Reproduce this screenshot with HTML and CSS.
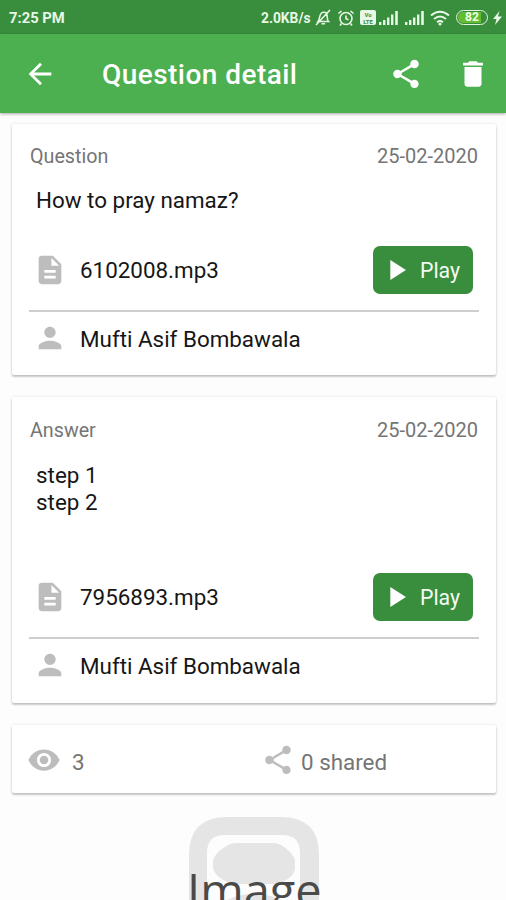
FILE: index.html
```html
<!DOCTYPE html>
<html lang="en">
<head>
<meta charset="utf-8">
<title>Question detail</title>
<link rel="stylesheet" href="styles.css">
</head>
<body>
<svg class="defs" width="0" height="0">
  <symbol id="share" viewBox="0 0 24 24"><path d="M18 16.08c-.76 0-1.44.3-1.96.77L8.91 12.7c.05-.23.09-.46.09-.7s-.04-.47-.09-.7l7.05-4.11c.54.5 1.25.81 2.04.81 1.66 0 3-1.34 3-3s-1.34-3-3-3-3 1.34-3 3c0 .24.04.47.09.7L8.04 9.81C7.5 9.31 6.79 9 6 9c-1.66 0-3 1.34-3 3s1.34 3 3 3c.79 0 1.5-.31 2.04-.81l7.12 4.16c-.05.21-.08.43-.08.65 0 1.61 1.31 2.92 2.92 2.92s2.92-1.31 2.92-2.92-1.31-2.92-2.92-2.92z"/></symbol>
  <symbol id="doc" viewBox="0 0 24 24"><path d="M14 2H6c-1.1 0-1.99.9-1.99 2L4 20c0 1.1.89 2 1.99 2H18c1.1 0 2-.9 2-2V8l-6-6zm2 16H8v-2h8v2zm0-4H8v-2h8v2zm-3-5V3.5L18.5 9H13z"/></symbol>
  <symbol id="person" viewBox="0 0 24 24"><path d="M12 12c2.21 0 4-1.79 4-4s-1.79-4-4-4-4 1.79-4 4 1.79 4 4 4zm0 2c-2.67 0-8 1.34-8 4v2h16v-2c0-2.66-5.33-4-8-4z"/></symbol>
  <symbol id="play" viewBox="0 0 24 24"><path d="M8 5v14l11-7z"/></symbol>
  <symbol id="signal" viewBox="0 0 20 14"><path d="M0 11h2.400v3H0zM4 9h2.400v5H4zM8 6.500h2.400V14H8zM12 3.500h2.400V14H12zM16.200 0h2.600v14h-2.600z"/></symbol>
</svg>

<div class="status">
  <span class="clock">7:25 PM</span>
  <span class="speed">2.0KB/s</span>
  <svg class="bell" viewBox="0 0 16 17"><path d="M3 12.500C5 10.500 4 6 6.500 4 8 2.800 10.500 3 11.500 4.500 12.800 6.500 11.500 10.500 13.500 12.500zM6.500 14.800h3.500M1 16 15 1"/></svg>
  <svg class="alarm" viewBox="0 0 18 18"><circle cx="9" cy="9.500" r="6"/><path d="M9 6.500v3.300l2.500 1M1.500 4.500 4.500 2M16.500 4.500 13.500 2M4.500 14.500 3 16.500M13.500 14.500 15 16.500"/></svg>
  <span class="volte"><span>Vo</span><span>LTE</span></span>
  <svg class="signal"><use href="#signal"/></svg>
  <svg class="signal second"><use href="#signal"/></svg>
  <svg class="wifi" viewBox="0 0 20 16"><path d="M1 5.500Q10-2 19 5.500M4 9Q10 4 16 9M7 12.200Q10 10 13 12.200"/><circle cx="10" cy="14" r="1.500"/></svg>
  <span class="battery"><span>82</span></span>
  <svg class="bolt" viewBox="0 0 9 14"><path d="M6.500 0 0 8h3.500L2 14l7-8.500H5z"/></svg>
</div>

<header class="bar">
  <svg class="icon" viewBox="0 0 24 24"><path d="M20 11H7.830l5.590-5.590L12 4l-8 8 8 8 1.410-1.410L7.830 13H20v-2z"/></svg>
  <h1>Question detail</h1>
  <svg class="icon"><use href="#share"/></svg>
  <svg class="icon trash" viewBox="0 0 24 24"><path d="M6 19c0 1.100.9 2 2 2h8c1.100 0 2-.9 2-2V7H6v12zM19 4h-3.500l-1-1h-5l-1 1H5v2h14V4z"/></svg>
</header>

<main>
  <section class="card">
    <div class="head"><span>Question</span><span>25-02-2020</span></div>
    <div class="body">How to pray namaz?</div>
    <div class="row file">
      <svg class="icon"><use href="#doc"/></svg><span>6102008.mp3</span>
      <div class="play"><svg><use href="#play"/></svg>Play</div>
    </div>
    <div class="row author"><svg class="icon"><use href="#person"/></svg><span>Mufti Asif Bombawala</span></div>
  </section>

  <section class="card answer">
    <div class="head"><span>Answer</span><span>25-02-2020</span></div>
    <div class="body">step 1<br>step 2</div>
    <div class="row file">
      <svg class="icon"><use href="#doc"/></svg><span>7956893.mp3</span>
      <div class="play"><svg><use href="#play"/></svg>Play</div>
    </div>
    <div class="row author"><svg class="icon"><use href="#person"/></svg><span>Mufti Asif Bombawala</span></div>
  </section>

  <section class="card stats">
    <div class="stat"><svg class="icon" viewBox="0 0 24 24"><path d="M12 4.500C7 4.500 2.730 7.610 1 12c1.730 4.390 6 7.500 11 7.500s9.270-3.110 11-7.500c-1.730-4.390-6-7.500-11-7.500zM12 17c-2.760 0-5-2.240-5-5s2.240-5 5-5 5 2.240 5 5-2.240 5-5 5zm0-8c-1.660 0-3 1.340-3 3s1.340 3 3 3 3-1.340 3-3-1.340-3-3-3z"/></svg><span>3</span></div>
    <div class="stat"><svg class="icon"><use href="#share"/></svg><span>0 shared</span></div>
  </section>

  <div class="placeholder">
    <svg class="frame" viewBox="0 0 130 83">
      <path fill="#e5e5e5" d="M0 83V38Q0 0 38 0H92Q130 0 130 38V83z"/>
      <path fill="#fdfdfd" d="M18 83V36Q18 18 36 18H93Q111 18 111 36V83z"/>
      <path fill="#e5e5e5" d="M24 44Q25 37 36 30Q41 26 47 26H84Q90 26 95 30Q105 37 106 44V52Q105 59 94 65Q90 67 84 67H47Q41 67 36 64Q25 58 24 51z"/>
      <path fill="#e5e5e5" d="M38 83Q65 70 92 83z"/>
    </svg>
    <span class="caption">Image</span>
  </div>
</main>
</body>
</html>
```

FILE: styles.css
```css
* { box-sizing: border-box; }
body {
  margin: 0;
  width: 506px;
  height: 900px;
  overflow: hidden;
  background: #fdfdfd;
  font-family: Roboto, sans-serif;
  color: #161616;
}
svg { display: block; flex: none; }
.defs { position: absolute; }
.icon { width: 34px; height: 34px; fill: currentColor; }

.status {
  display: flex;
  align-items: center;
  height: 34px;
  padding: 1px 4px 0 9px;
  background: #388e3c;
  color: #e9f7e6;
}
.clock { flex: 1; font-size: 14.8px; font-weight: 700; }
.speed { width: 51px; font-size: 13.8px; font-weight: 700; margin-right: 3px; white-space: nowrap; }
.bell { width: 16px; height: 17px; margin-right: 6px; }
.alarm { width: 18px; height: 18px; margin-right: 5px; }
.bell, .alarm, .wifi { fill: none; stroke: currentColor; stroke-width: 1.6; }
.volte {
  display: flex;
  flex-direction: column;
  align-items: center;
  justify-content: center;
  width: 16px;
  height: 15px;
  margin-right: 3px;
  border-radius: 2px;
  background: #e9f7e6;
  color: #388e3c;
  font-size: 6px;
  line-height: 7px;
  font-weight: 700;
}
.signal { width: 20px; height: 14px; fill: currentColor; }
.second { margin: 0 5px 0 6px; }
.wifi { width: 20px; height: 16px; stroke-width: 2; margin-right: 6px; }
.wifi circle { fill: currentColor; stroke: none; }
.battery {
  width: 32px;
  height: 15px;
  margin-right: 5px;
  padding: 1px;
  border: 1.5px solid #dff3dc;
  border-radius: 8px;
}
.battery span {
  display: block;
  height: 11px;
  border-radius: 5px;
  background: linear-gradient(90deg, #62bd30 82%, transparent 82%);
  color: #f0ffe8;
  font-size: 12px;
  line-height: 11px;
  font-weight: 700;
  text-align: center;
}
.bolt { width: 9px; height: 14px; fill: currentColor; }

.bar {
  display: flex;
  align-items: center;
  height: 79px;
  padding: 0 16px 0 23px;
  background: #4caf50;
  color: #fff;
  box-shadow: 0 1px 3px rgba(0, 0, 0, .35);
}
.bar h1 {
  flex: 1;
  margin: 2px 0 0 45px;
  font-size: 28px;
  line-height: 34px;
  font-weight: 500;
  letter-spacing: .45px;
}
.trash { margin-left: 33px; }

main { display: flex; flex-direction: column; gap: 22px; padding: 11px 10px 0 12px; }
.card {
  height: 251px;
  padding: 18px 17px 0;
  background: #fff;
  border-radius: 2px;
  box-shadow: 0 2px 2px rgba(0, 0, 0, .2), 0 0 3px rgba(0, 0, 0, .12);
}
.answer { height: 306px; padding-top: 19px; }
.head {
  display: flex;
  justify-content: space-between;
  align-items: baseline;
  height: 28px;
  padding: 0 1px;
  color: #757575;
  font-size: 20px;
  line-height: 28px;
}
.head span:first-child { font-size: 19.7px; }
.body { height: 76px; padding: 17px 7px 0; font-size: 22.4px; line-height: 27px; }
.answer .body { height: 129px; padding-top: 18px; }
.row { display: flex; align-items: center; padding-left: 4px; font-size: 22.4px; }
.row .icon { margin-right: 12px; color: #bdbdbd; }
.file { height: 66px; padding-right: 6px; padding-bottom: 16px; border-bottom: 2px solid #cecece; }
.file span { flex: 1; padding-left: 1px; }
.author { height: 52px; }
.author span { padding: 2px 0 0 1px; }
.play {
  display: flex;
  align-items: center;
  width: 100px;
  height: 48px;
  padding-left: 6px;
  border-radius: 7px;
  background: #388e3c;
  color: #f4fbf3;
  font-size: 21.3px;
}
.play svg { width: 34px; height: 34px; margin-right: 7px; fill: #fff; }

.stats { display: grid; grid-template-columns: 234px 1fr; height: 68px; padding: 2px 15px 0; }
.stat { display: flex; align-items: center; color: #757575; font-size: 22.4px; }
.stat .icon { color: #bdbdbd; margin-right: 11px; }
.stat + .stat .icon { margin-right: 6px; }
.stat span { padding-top: 3px; }

.placeholder { position: relative; width: 130px; height: 83px; margin: 2px 0 0 177px; }
.frame { width: 130px; height: 83px; }
.caption {
  position: absolute;
  left: -2px;
  top: 42px;
  font-family: "Open Sans", sans-serif;
  font-size: 47px;
  line-height: 62px;
  color: #4a4a4a;
}
```
